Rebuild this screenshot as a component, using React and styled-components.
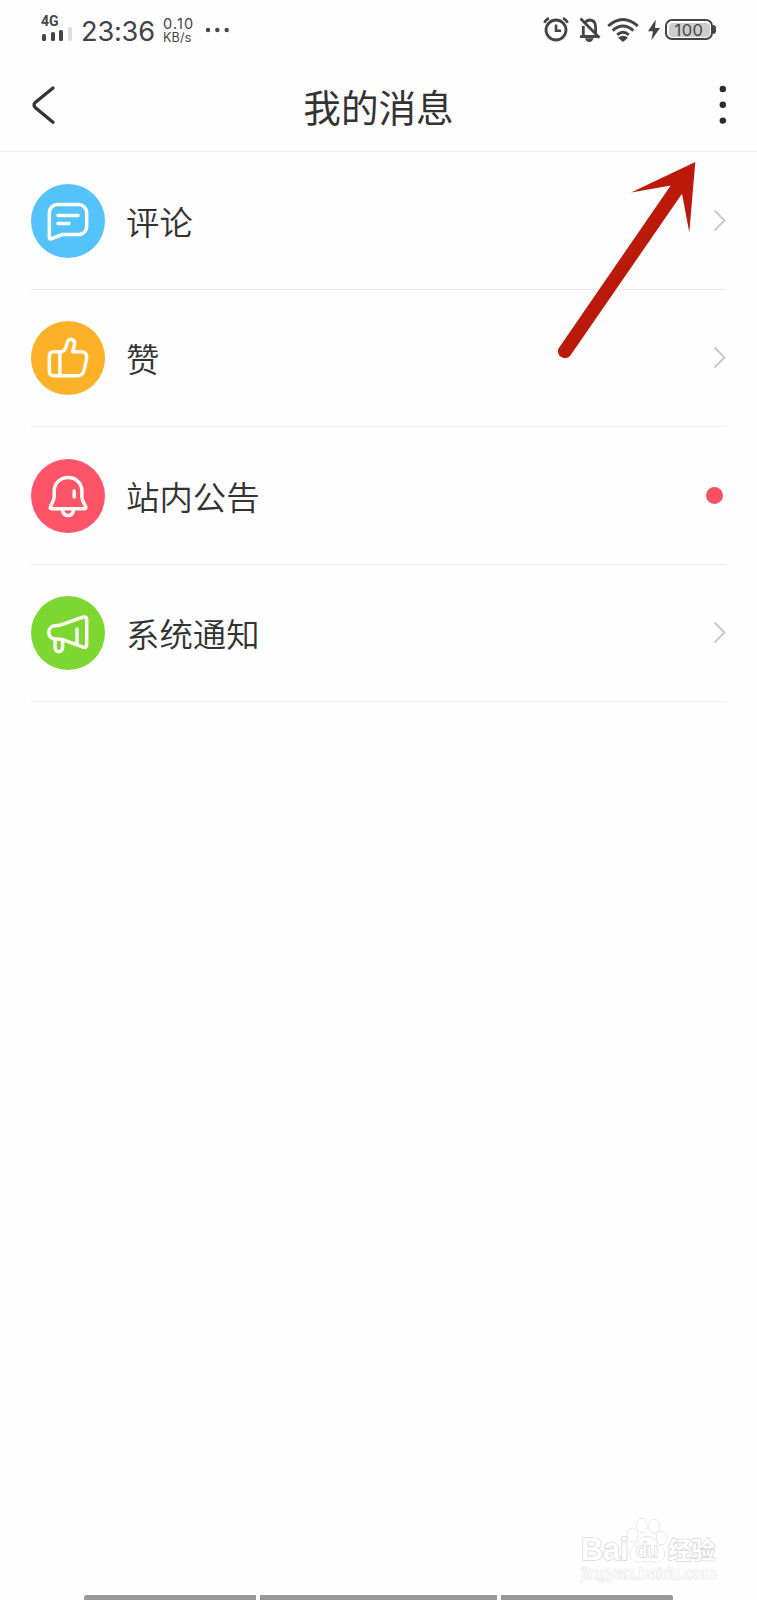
import React from 'react';
import styled, { createGlobalStyle } from 'styled-components';

const GlobalStyle = createGlobalStyle`
  * {
    box-sizing: border-box;
    margin: 0;
    padding: 0;
  }

  body {
    background-color: #fefefe;
    color: #333333;
    font-family: 'Noto Sans CJK SC', 'Noto Sans', sans-serif;
  }

  svg {
    display: block;
    flex-shrink: 0;
  }
`;

const CommentIcon = () => (
  <RowIcon viewBox="0 0 74 74">
    <path d="M18.3 53.6V28.6a8 8 0 0 1 8-8H47.7a8 8 0 0 1 8 8V42.6a8 8 0 0 1-8 8H31L20.2 54.8Q18.3 55.4 18.3 53.6Z" />
    <path d="M27 31.6H47M27 39.6H38" />
  </RowIcon>
);

const LikeIcon = () => (
  <RowIcon viewBox="0 0 74 74">
    <path d="M22.3 30.7H29.5C33.5 30.7 34.6 27.5 36.4 21.5C37 18.6 39.6 17.8 41.7 18.8C43.8 19.8 43.9 22 43.4 24L41.6 30.7H50C54.6 30.7 56.4 33.5 55.5 38L53.4 48C52.5 52.6 50.5 54.7 47 54.7H22.3A4 4 0 0 1 18.3 50.7V34.7A4 4 0 0 1 22.3 30.7Z" />
    <path d="M28.9 31V54.5" />
  </RowIcon>
);

const BellIcon = () => (
  <RowIcon viewBox="0 0 74 74">
    <path d="M37 18.4C45 18.4 50.9 24.5 50.9 32V37.5C50.9 42 53.5 45 54.7 47.8Q55.3 49.7 53.3 49.7H20.7Q18.8 49.7 19.4 47.8C20.5 45 23.2 42 23.2 37.5V32C23.2 24.5 29 18.4 37 18.4Z" />
    <path d="M31.3 50.5C31.9 54.8 34.4 56.6 37 56.6S42.1 54.8 42.7 50.5M43.2 32V38" />
  </RowIcon>
);

const MegaphoneIcon = () => (
  <RowIcon viewBox="0 0 74 74">
    <path d="M24.5 29.7C28 29.7 29 29.6 32 28.2L52 21.2Q55.7 20.2 55.7 23.6V49Q55.7 52.4 52 51.2L32.5 43.8C30 42.9 28 43 24.5 43C20.4 43 17.8 40 17.8 36.3S20.4 29.7 24.5 29.7Z" />
    <path d="M24 43.5V51.5A3.8 4.2 0 0 0 31.6 51.5V44M46 33V48.5" />
  </RowIcon>
);

const rows = [
  { label: '评论', color: '#54c3f9', Icon: CommentIcon },
  { label: '赞', color: '#fdb128', Icon: LikeIcon },
  { label: '站内公告', color: '#fe5467', Icon: BellIcon, unread: true },
  { label: '系统通知', color: '#7cd831', Icon: MegaphoneIcon },
];

const App = () => {
  return (
    <>
      <GlobalStyle />
      <Screen>
        <StatusBar>
          <Signal>
            <NetworkType>4G</NetworkType>
            <SignalBars>
              <Bar $height="7px" />
              <Bar $height="9px" />
              <Bar $height="11px" />
              <Bar $height="13.5px" $off />
            </SignalBars>
          </Signal>
          <Clock>23:36</Clock>
          <NetSpeed>
            <SpeedValue>0.10</SpeedValue>
            <SpeedUnit>KB/s</SpeedUnit>
          </NetSpeed>
          <svg width="24" height="6" viewBox="0 0 24 6" fill="#444">
            <circle cx="3" cy="3" r="2.2" />
            <circle cx="12.3" cy="3" r="2.2" />
            <circle cx="21.7" cy="3" r="2.2" />
          </svg>
          <StatusIcons>
            {/* alarm */}
            <svg width="26" height="26" viewBox="0 0 26 26" fill="none" stroke="#444">
              <circle cx="13" cy="13" r="10" strokeWidth="2.8" />
              <path d="M13 7.5V13.8H18" strokeWidth="2.5" />
              <path d="M1.5 5.8Q2.5 2.8 6 1.3M24.5 5.8Q23.5 2.8 20 1.3" strokeWidth="2.6" />
            </svg>
            {/* muted bell */}
            <svg width="24" height="26" viewBox="0 0 24 26" fill="none" stroke="#444">
              <path d="M7 5.5Q9 3 12 3Q17.6 3.5 17.6 10V16M5.3 9V19.5H17" strokeWidth="2.8" />
              <path d="M2 19.6H20M2.5 1.5L21.5 20.8" strokeWidth="2.7" />
              <path d="M7 21.3H15.5Q14.5 25 11.3 25T7 21.3Z" fill="#444" stroke="none" />
            </svg>
            {/* wifi */}
            <svg width="32" height="26" viewBox="0 0 32 26" fill="none" stroke="#444" strokeWidth="2.9">
              <path d="M1.2 9Q16 -4 30.8 9" />
              <path d="M5.7 13.6Q16 4.5 26.3 13.6" />
              <path d="M10.2 17.9Q16 12.8 21.8 17.9" />
              <path d="M11 20.7Q16 17 21 20.7L16 25Z" fill="#444" stroke="none" />
            </svg>
            {/* charging */}
            <svg width="12" height="22" viewBox="0 0 12 22" fill="#444">
              <path d="M7.8 0.6L0 12.2H5L3.4 21.2L12 9H7Z" />
            </svg>
            <Battery>
              <BatteryCase>
                <BatteryLevel>100</BatteryLevel>
              </BatteryCase>
              <BatteryCap />
            </Battery>
          </StatusIcons>
        </StatusBar>

        <Header>
          <svg width="24" height="40" viewBox="0 0 24 40">
            <path
              d="M21 3L3.5 17.3Q0.5 20 3.5 22.8L21 37.3"
              fill="none"
              stroke="#333"
              strokeWidth="3.3"
              strokeLinecap="round"
            />
          </svg>
          <Title>我的消息</Title>
          <svg width="8" height="40" viewBox="0 0 8 40" fill="#2b2b2b">
            <circle cx="3.8" cy="4" r="3.2" />
            <circle cx="3.8" cy="19.8" r="3.2" />
            <circle cx="3.8" cy="35.6" r="3.2" />
          </svg>
        </Header>

        <List>
          {rows.map(({ label, color, Icon, unread }) => (
            <Row key={label}>
              <IconCircle $color={color}>
                <Icon />
              </IconCircle>
              <Label>{label}</Label>
              {unread ? (
                <UnreadDot />
              ) : (
                <svg width="13" height="24" viewBox="0 0 13 24">
                  <path
                    d="M1.5 1.5L11.5 11.5L1.5 21.5"
                    fill="none"
                    stroke="#c8c8c8"
                    strokeWidth="1.9"
                  />
                </svg>
              )}
            </Row>
          ))}
        </List>

        <PointerArrow viewBox="0 0 150 210">
          <path d="M145.3 12L81 42.5L120.7 35.5L8.7 198.2A6.9 6.9 0 0 0 20.4 205.4L132 43.8L139.3 82.5Z" />
        </PointerArrow>

        <Watermark>
          <Brand>
            <BrandLatin>Bai</BrandLatin>
            <Paw>
              <svg width="42" height="46" viewBox="0 0 42 46" fill="#fff" stroke="#d2d2d2">
                <ellipse cx="4.5" cy="18" rx="5.2" ry="6.7" />
                <ellipse cx="13.9" cy="8.5" rx="5" ry="7" />
                <ellipse cx="26.2" cy="9.3" rx="5.4" ry="6.8" />
                <ellipse cx="33.7" cy="20.8" rx="5.3" ry="6.5" />
                <path d="M19.2 19.5C26.2 19.5 27.7 25 32.2 29C36.2 32.5 38.2 37 35.2 41.5C31.7 47 24.2 44 19.2 44S7.2 47 3.4 41.5C0.7 37 2.2 32.5 6.2 29C10.7 25 12.2 19.5 19.2 19.5Z" />
              </svg>
              <PawText>du</PawText>
            </Paw>
            <BrandHan>经验</BrandHan>
          </Brand>
          <Url>jingyan.baidu.com</Url>
        </Watermark>

        <BottomBar>
          <Segment />
          <Segment />
          <Segment />
        </BottomBar>
      </Screen>
    </>
  );
};

const Screen = styled.main`
  position: relative;
  display: flex;
  flex-direction: column;
  width: 757px;
  height: 1600px;
  overflow: hidden;
  background-color: #fefefe;
`;

const StatusBar = styled.div`
  display: flex;
  align-items: center;
  height: 60px;
  padding: 0 41px 0 42px;
  color: #444444;
  font-family: Inter, sans-serif;
`;

const Signal = styled.div`
  width: 30px;
  margin-right: 9px;
  padding-bottom: 5px;
`;

const NetworkType = styled.div`
  margin-left: -1px;
  font-family: Roboto, sans-serif;
  font-size: 14px;
  font-weight: 700;
  line-height: 12px;
`;

const SignalBars = styled.div`
  display: flex;
  align-items: flex-end;
  gap: 4.4px;
  height: 14px;
`;

const Bar = styled.span`
  width: 4.4px;
  height: ${(props) => props.$height};
  border-radius: 1.5px;
  background-color: ${(props) => (props.$off ? '#dddddd' : '#444444')};
`;

const Clock = styled.div`
  width: 82px;
  padding-top: 4px;
  font-size: 27.2px;
  letter-spacing: -0.2px;
  line-height: 32px;
`;

const NetSpeed = styled.div`
  width: 42px;
  white-space: nowrap;
`;

const SpeedValue = styled.div`
  font-size: 14.5px;
  letter-spacing: 1.1px;
  line-height: 14px;
`;

const SpeedUnit = styled.div`
  font-size: 12.5px;
  letter-spacing: 0.2px;
  line-height: 13px;
`;

const StatusIcons = styled.div`
  display: flex;
  align-items: center;
  margin-left: auto;

  > svg:nth-child(1) {
    margin-right: 9px;
  }

  > svg:nth-child(2) {
    margin-right: 5px;
  }

  > svg:nth-child(3) {
    margin-right: 9px;
  }

  > svg:nth-child(4) {
    margin-right: 5px;
  }
`;

const Battery = styled.div`
  display: flex;
  align-items: center;
  margin-bottom: 1px;
`;

const BatteryCase = styled.div`
  width: 48px;
  height: 21px;
  padding: 1.5px;
  border: 2px solid #444444;
  border-radius: 7px;
`;

const BatteryLevel = styled.div`
  height: 14px;
  border-radius: 4px;
  background-color: #cccccc;
  font-size: 16.5px;
  letter-spacing: 0.5px;
  line-height: 14px;
  text-align: center;
`;

const BatteryCap = styled.span`
  width: 3px;
  height: 9px;
  border-radius: 0 3px 3px 0;
  background-color: #444444;
`;

const Header = styled.header`
  display: flex;
  align-items: center;
  justify-content: space-between;
  height: 92px;
  padding: 0 30.5px 1px 32px;
  border-bottom: 1px solid #f1f1f1;
`;

const Title = styled.h1`
  margin-left: -17.5px;
  padding-top: 2px;
  font-size: 37.6px;
  font-weight: 400;
  line-height: 50px;
`;

const List = styled.ul`
  padding: 0 31px;
  list-style: none;
`;

const Row = styled.li`
  display: flex;
  align-items: center;
  height: 137.6px;
  padding-top: 0.6px;
  border-bottom: 1px solid #e7e7e7;

  &:nth-child(even) {
    border-bottom-color: #f1f1f1;
  }
`;

const IconCircle = styled.div`
  width: 74px;
  height: 74px;
  margin-right: 21px;
  border-radius: 50%;
  background-color: ${(props) => props.$color};
`;

const RowIcon = styled.svg`
  width: 74px;
  height: 74px;
  fill: none;
  stroke: #fffdf5;
  stroke-width: 3.5;
  stroke-linecap: round;
  stroke-linejoin: round;
`;

const Label = styled.span`
  flex: 1;
  font-size: 33.4px;
  font-weight: 350;
  line-height: 48px;
`;

const UnreadDot = styled.span`
  width: 17px;
  height: 17px;
  margin-right: 3.5px;
  border-radius: 50%;
  background-color: #f84f62;
`;

const PointerArrow = styled.svg`
  position: absolute;
  top: 150px;
  left: 550px;
  width: 150px;
  height: 210px;
  fill: #bb190a;
`;

const Watermark = styled.div`
  position: absolute;
  top: 1517px;
  left: 581px;
  width: 140px;
  color: #ffffff;
  -webkit-text-stroke: 1.6px #d8d8d8;
  paint-order: stroke fill;
`;

const Brand = styled.div`
  display: flex;
  align-items: flex-end;
  height: 46px;
`;

const BrandLatin = styled.span`
  width: 47px;
  font-family: 'Liberation Sans', sans-serif;
  font-size: 30.5px;
  font-weight: 700;
  line-height: 28px;
`;

const Paw = styled.div`
  position: relative;
  width: 40px;

  svg {
    overflow: visible;
  }
`;

const PawText = styled.span`
  position: absolute;
  top: 22px;
  left: 8px;
  font-family: 'Liberation Sans', sans-serif;
  font-size: 20px;
  line-height: 22px;
`;

const BrandHan = styled.span`
  font-size: 23.5px;
  font-weight: 700;
  line-height: 27px;
  white-space: nowrap;
`;

const Url = styled.div`
  padding-top: 1px;
  font-family: 'Liberation Sans', sans-serif;
  font-size: 16.8px;
  line-height: 20px;
  -webkit-text-stroke: 1.1px #e2e2e2;
`;

const BottomBar = styled.div`
  display: grid;
  grid-template-columns: 172px 237px 172px;
  gap: 4px;
  height: 5px;
  margin-top: auto;
  padding-left: 84px;
`;

const Segment = styled.span`
  background-color: #999999;

  &:first-child {
    border-top-left-radius: 2px;
  }

  &:last-child {
    border-top-right-radius: 2px;
  }
`;

export default App;
